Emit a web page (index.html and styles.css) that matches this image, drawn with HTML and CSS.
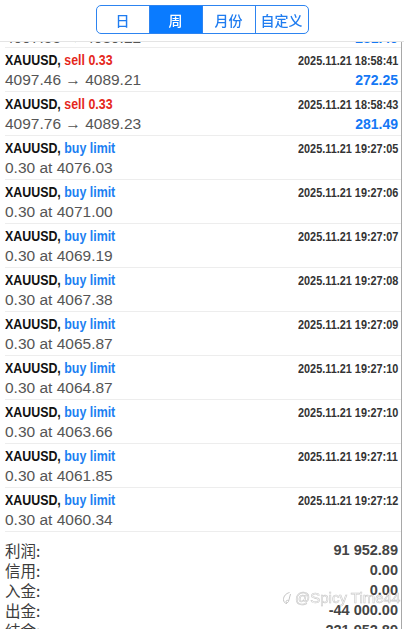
FILE: index.html
```html
<!DOCTYPE html>
<html lang="zh">
<head>
  <meta charset="UTF-8" />
  <meta name="viewport" content="width=device-width, initial-scale=1.0">
  <title>历史</title>
  <link rel="stylesheet" href="styles.css">
</head>
<body>
  <div class="toolbar">
    <div class="segments">
      <span class="seg">日</span>
      <span class="seg active">周</span>
      <span class="seg">月份</span>
      <span class="seg">自定义</span>
    </div>
  </div>

  <div class="page">
    <div class="row cut">
      <div class="line"><span class="title">XAUUSD, <span class="sell">sell 0.33</span></span><span class="time">2025.11.21 18:58:39</span></div>
      <div class="line"><span class="price">4097.55 → 4089.22</span><span class="profit">281.49</span></div>
    </div>
    <div class="row">
      <div class="line"><span class="title">XAUUSD, <span class="sell">sell 0.33</span></span><span class="time">2025.11.21 18:58:41</span></div>
      <div class="line"><span class="price">4097.46 → 4089.21</span><span class="profit">272.25</span></div>
    </div>
    <div class="row">
      <div class="line"><span class="title">XAUUSD, <span class="sell">sell 0.33</span></span><span class="time">2025.11.21 18:58:43</span></div>
      <div class="line"><span class="price">4097.76 → 4089.23</span><span class="profit">281.49</span></div>
    </div>
    <div class="row">
      <div class="line"><span class="title">XAUUSD, <span class="buy">buy limit</span></span><span class="time">2025.11.21 19:27:05</span></div>
      <div class="line"><span class="price">0.30 at 4076.03</span></div>
    </div>
    <div class="row">
      <div class="line"><span class="title">XAUUSD, <span class="buy">buy limit</span></span><span class="time">2025.11.21 19:27:06</span></div>
      <div class="line"><span class="price">0.30 at 4071.00</span></div>
    </div>
    <div class="row">
      <div class="line"><span class="title">XAUUSD, <span class="buy">buy limit</span></span><span class="time">2025.11.21 19:27:07</span></div>
      <div class="line"><span class="price">0.30 at 4069.19</span></div>
    </div>
    <div class="row">
      <div class="line"><span class="title">XAUUSD, <span class="buy">buy limit</span></span><span class="time">2025.11.21 19:27:08</span></div>
      <div class="line"><span class="price">0.30 at 4067.38</span></div>
    </div>
    <div class="row">
      <div class="line"><span class="title">XAUUSD, <span class="buy">buy limit</span></span><span class="time">2025.11.21 19:27:09</span></div>
      <div class="line"><span class="price">0.30 at 4065.87</span></div>
    </div>
    <div class="row">
      <div class="line"><span class="title">XAUUSD, <span class="buy">buy limit</span></span><span class="time">2025.11.21 19:27:10</span></div>
      <div class="line"><span class="price">0.30 at 4064.87</span></div>
    </div>
    <div class="row">
      <div class="line"><span class="title">XAUUSD, <span class="buy">buy limit</span></span><span class="time">2025.11.21 19:27:10</span></div>
      <div class="line"><span class="price">0.30 at 4063.66</span></div>
    </div>
    <div class="row">
      <div class="line"><span class="title">XAUUSD, <span class="buy">buy limit</span></span><span class="time">2025.11.21 19:27:11</span></div>
      <div class="line"><span class="price">0.30 at 4061.85</span></div>
    </div>
    <div class="row">
      <div class="line"><span class="title">XAUUSD, <span class="buy">buy limit</span></span><span class="time">2025.11.21 19:27:12</span></div>
      <div class="line"><span class="price">0.30 at 4060.34</span></div>
    </div>

    <div class="summary">
      <div class="sum-row"><span class="label">利润:</span><span class="value">91 952.89</span></div>
      <div class="sum-row"><span class="label">信用:</span><span class="value">0.00</span></div>
      <div class="sum-row"><span class="label">入金:</span><span class="value">0.00</span></div>
      <div class="sum-row"><span class="label">出金:</span><span class="value">-44 000.00</span></div>
      <div class="sum-row"><span class="label">结余:</span><span class="value">221 952.89</span></div>
    </div>
  </div>

  <div class="watermark">
    <svg width="12" height="14" viewBox="0 0 12 14"><path d="M7.5 1.5 C4 2.5 1.5 5 1.5 8.5 C1.5 11 3 12.5 5 12.5" fill="none" stroke="#c4c4c4" stroke-width="1"/><path d="M8.5 3 L6.5 10.5 C6 12 4 12 4 10.5 C4 9.5 5.5 9 6.5 9.5" fill="none" stroke="#c4c4c4" stroke-width="1"/></svg>
    <span>@Spicy Time44</span>
  </div>
</body>
</html>
```

FILE: styles.css
```css
html, body { margin: 0; padding: 0; overflow: hidden; background: #fff; }
body { font-family: "Liberation Sans", Arial, "Noto Sans CJK SC", sans-serif; color: #333; }

.toolbar { position: fixed; top: 0; left: 0; right: 0; height: 41px; background: #fff; box-shadow: 0 1px 0 #e4e4e4; z-index: 2; display: flex; justify-content: center; padding-top: 5px; box-sizing: border-box; }
.segments { display: flex; height: 29px; border: 1px solid #2d84f0; border-radius: 5px; overflow: hidden; box-sizing: border-box; }
.seg { width: 53px; display: flex; align-items: center; justify-content: center; font-family: "Noto Sans CJK SC", sans-serif; font-size: 14px; font-weight: 500; color: #1f7cf0; border-left: 1px solid #2d84f0; box-sizing: border-box; }
.seg:first-child { border-left: none; width: 52px; }
.seg.active { background: #0a7bff; color: #fff; }

.page { width: 401px; border-right: 1px solid #a8a8a8; padding-top: 4px; box-sizing: content-box; min-height: 700px; }

.row { margin-left: 5px; padding: 2px 3px 1px 0; border-bottom: 1px solid #ededed; }
.row.cut { padding-top: 4px; padding-bottom: 0; height: 39px; overflow: hidden; }
.line { display: flex; justify-content: space-between; align-items: baseline; height: 20px; line-height: 20px; }
.title { display: inline-block; font-weight: bold; font-size: 15.5px; color: #111; transform: scaleX(0.8); transform-origin: left center; white-space: nowrap; }
.sell { color: #e5281c; }
.buy { color: #1c7ff2; }
.time { display: inline-block; font-weight: bold; font-size: 12.5px; color: #333; transform: scaleX(0.87); transform-origin: right center; white-space: nowrap; }
.price { font-size: 15.5px; color: #555; }
.profit { font-weight: bold; font-size: 14px; color: #1478f5; }

.summary { margin-left: 5px; padding: 8px 3px 0 0; }
.sum-row { display: flex; justify-content: space-between; align-items: center; height: 20px; line-height: 20px; }
.label { font-family: "Noto Sans CJK SC", sans-serif; font-size: 15.5px; color: #3c3c3c; }
.value { font-weight: bold; font-size: 14.5px; color: #444; }

.watermark { position: fixed; left: 282px; top: 589px; display: flex; align-items: center; gap: 1px; font-size: 15px; color: rgba(255, 255, 255, 0.7); -webkit-text-stroke: 0.6px #c8c8c8; z-index: 3; }
```
